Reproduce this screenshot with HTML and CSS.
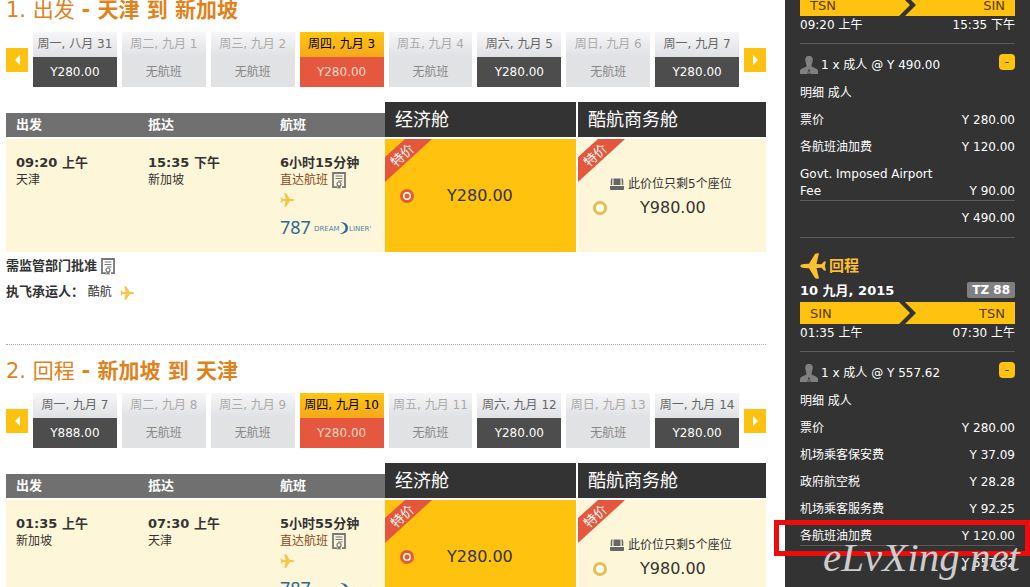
FILE: index.html
```
<!DOCTYPE html>
<html lang="zh-CN">
<head>
<meta charset="utf-8">
<title>选择航班</title>
<link rel="stylesheet" href="styles.css">
</head>

<body>
<svg class="defs" aria-hidden="true">
	<symbol id="plane" viewBox="0 0 26 26"><path d="M0 13Q1 11 4 11L9 10.800 15 1Q16.500 0 19 0.500L16.500 11 21.500 11.300 24 8.500H26L24.800 13 26 17.500H24L21.500 14.700 16.500 15 19 25.500Q16.500 26 15 25L9 15.200 4 15Q1 15 0 13z"/></symbol>
	<symbol id="doc" viewBox="0 0 14 17"><path d="M5 15.200H1V1H13V15.200H10" fill="none" stroke="#777" stroke-width="1.800"/><path d="M3.500 4H10.500M3.500 6.500H10.500M6 9H10.500" stroke="#777" stroke-width="1.200"/><circle cx="7" cy="12" r="2" fill="none" stroke="#777" stroke-width="1.200"/><path d="M5.500 14v3l1.500-1 1.500 1v-3z" fill="#777"/></symbol>
	<symbol id="person" viewBox="0 0 18 18"><path d="M9 0C6 0 5 2 5.300 4.500 5.600 7 6.500 8 6.500 10 6.500 11.500 0 12 0 15V18H7.500L8.300 13.500H9.700L10.500 18H18V15C18 12 11.500 11.500 11.500 10 11.500 8 12.400 7 12.700 4.500 13 2 12 0 9 0z" fill="#808080"/><path d="M9 14l1 3-1 1-1-1z" fill="#808080"/></symbol>
	<symbol id="seat" viewBox="0 0 14 12"><path d="M3.500 7V0.500H10.500V7z" fill="#666"/><path d="M1.500 7V2.500Q1.500 1 2.500 1M12.500 7V2.500Q12.500 1 11.500 1" fill="none" stroke="#666" stroke-width="1.500"/><path d="M0 8H14V11Q14 12 13 12H1Q0 12 0 11z" fill="#666"/></symbol>
	<symbol id="ribbon" viewBox="0 0 48 44"><path d="M20 0H47L0 43V18z" fill="#e4573d"/><text x="17" y="21" text-anchor="middle" transform="rotate(-43 17 16)" fill="#fff" font-size="13">特价</text></symbol>
	<symbol id="dream" viewBox="0 0 94 18"><text x="0" y="15" font-size="18" font-family="Noto Sans, sans-serif" fill="#2b6a94">787</text><text x="34" y="12" font-size="7" fill="#4f86a8">DREAM</text><text x="69" y="12" font-size="7" fill="#4f86a8">LINER'</text><path d="M60 3Q68 3 68 9T59 15Q65.500 13 65.500 9T60 3z" fill="#2b6a94"/></symbol>
	<symbol id="chevron" viewBox="0 0 18 22"><path d="M0 0H6L17 11 6 22H0L11 11z" fill="#333"/></symbol>
</svg>

<main class="main">
	<section class="trip">
		<h2>1. 出发 <b>- 天津 到 新加坡</b></h2>
		<div class="dates">
			<button class="arrow" aria-label="前一周"><svg width="5" height="10"><path d="M5 0V10L0 5z" fill="#fff"/></svg></button>
			<ul>
				<li><a href="#"><span>周一, 八月 31</span><em>Y280.00</em></a></li>
				<li class="none"><a href="#"><span>周二, 九月 1</span><em>无航班</em></a></li>
				<li class="none"><a href="#"><span>周三, 九月 2</span><em>无航班</em></a></li>
				<li class="on"><a href="#"><span>周四, 九月 3</span><em>Y280.00</em></a></li>
				<li class="none"><a href="#"><span>周五, 九月 4</span><em>无航班</em></a></li>
				<li><a href="#"><span>周六, 九月 5</span><em>Y280.00</em></a></li>
				<li class="none"><a href="#"><span>周日, 九月 6</span><em>无航班</em></a></li>
				<li><a href="#"><span>周一, 九月 7</span><em>Y280.00</em></a></li>
			</ul>
			<button class="arrow" aria-label="后一周"><svg width="5" height="10"><path d="M0 0V10L5 5z" fill="#fff"/></svg></button>
		</div>
		<table class="flight">
			<tr>
				<th class="c_time">出发</th>
				<th class="c_time">抵达</th>
				<th class="c_info">航班</th>
				<th class="cabin">经济舱</th>
				<th class="cabin biz">酷航商务舱</th>
			</tr>
			<tr>
				<td><strong>09:20 上午</strong><br>天津</td>
				<td><strong>15:35 下午</strong><br>新加坡</td>
				<td><strong>6小时15分钟</strong><br><a href="#" class="direct">直达航班</a> <svg class="doc"><use href="#doc"/></svg>
					<svg class="plane_s"><use href="#plane"/></svg>
					<svg class="dream"><use href="#dream"/></svg>
				</td>
				<td class="fare on"><svg class="ribbon"><use href="#ribbon"/></svg>
					<label><input type="radio" name="go" checked>Y280.00</label>
				</td>
				<td class="fare biz"><svg class="ribbon"><use href="#ribbon"/></svg>
					<p><svg class="seat"><use href="#seat"/></svg>此价位只剩5个座位</p>
					<label><input type="radio" name="go">Y980.00</label>
				</td>
			</tr>
		</table>
		<div class="notes">
			<p><b>需监管部门批准</b> <svg class="doc"><use href="#doc"/></svg></p>
			<p><b>执飞承运人：</b> 酷航 <svg class="plane_s"><use href="#plane"/></svg></p>
		</div>
	</section>

	<section class="trip">
		<h2>2. 回程 <b>- 新加坡 到 天津</b></h2>
		<div class="dates">
			<button class="arrow" aria-label="前一周"><svg width="5" height="10"><path d="M5 0V10L0 5z" fill="#fff"/></svg></button>
			<ul>
				<li><a href="#"><span>周一, 九月 7</span><em>Y888.00</em></a></li>
				<li class="none"><a href="#"><span>周二, 九月 8</span><em>无航班</em></a></li>
				<li class="none"><a href="#"><span>周三, 九月 9</span><em>无航班</em></a></li>
				<li class="on"><a href="#"><span>周四, 九月 10</span><em>Y280.00</em></a></li>
				<li class="none"><a href="#"><span>周五, 九月 11</span><em>无航班</em></a></li>
				<li><a href="#"><span>周六, 九月 12</span><em>Y280.00</em></a></li>
				<li class="none"><a href="#"><span>周日, 九月 13</span><em>无航班</em></a></li>
				<li><a href="#"><span>周一, 九月 14</span><em>Y280.00</em></a></li>
			</ul>
			<button class="arrow" aria-label="后一周"><svg width="5" height="10"><path d="M0 0V10L5 5z" fill="#fff"/></svg></button>
		</div>
		<table class="flight">
			<tr>
				<th class="c_time">出发</th>
				<th class="c_time">抵达</th>
				<th class="c_info">航班</th>
				<th class="cabin">经济舱</th>
				<th class="cabin biz">酷航商务舱</th>
			</tr>
			<tr>
				<td><strong>01:35 上午</strong><br>新加坡</td>
				<td><strong>07:30 上午</strong><br>天津</td>
				<td><strong>5小时55分钟</strong><br><a href="#" class="direct">直达航班</a> <svg class="doc"><use href="#doc"/></svg>
					<svg class="plane_s"><use href="#plane"/></svg>
					<svg class="dream"><use href="#dream"/></svg>
				</td>
				<td class="fare on"><svg class="ribbon"><use href="#ribbon"/></svg>
					<label><input type="radio" name="back" checked>Y280.00</label>
				</td>
				<td class="fare biz"><svg class="ribbon"><use href="#ribbon"/></svg>
					<p><svg class="seat"><use href="#seat"/></svg>此价位只剩5个座位</p>
					<label><input type="radio" name="back">Y980.00</label>
				</td>
			</tr>
		</table>
	</section>
</main>

<aside class="side">
	<div class="route"><span>TSN</span><svg><use href="#chevron"/></svg><span>SIN</span></div>
	<div class="times"><span>09:20 上午</span><span>15:35 下午</span></div>
	<div class="pax"><svg><use href="#person"/></svg><span>1 x 成人 @ Y 490.00</span><button aria-label="收起明细">-</button></div>
	<table class="fees">
		<tr><td colspan="2">明细 成人</td></tr>
		<tr><td>票价</td><td>Y 280.00</td></tr>
		<tr><td>各航班油加费</td><td>Y 120.00</td></tr>
		<tr><td>Govt. Imposed Airport Fee</td><td>Y 90.00</td></tr>
	</table>
	<div class="total">Y 490.00</div>

	<h3><svg><use href="#plane"/></svg>回程</h3>
	<div class="day"><b>10 九月, 2015</b><b class="no">TZ 88</b></div>
	<div class="route"><span>SIN</span><svg><use href="#chevron"/></svg><span>TSN</span></div>
	<div class="times"><span>01:35 上午</span><span>07:30 上午</span></div>
	<div class="pax"><svg><use href="#person"/></svg><span>1 x 成人 @ Y 557.62</span><button aria-label="收起明细">-</button></div>
	<table class="fees">
		<tr><td colspan="2">明细 成人</td></tr>
		<tr><td>票价</td><td>Y 280.00</td></tr>
		<tr><td>机场乘客保安费</td><td>Y 37.09</td></tr>
		<tr><td>政府航空税</td><td>Y 28.28</td></tr>
		<tr><td>机场乘客服务费</td><td>Y 92.25</td></tr>
		<tr><td>各航班油加费</td><td>Y 120.00</td></tr>
	</table>
	<div class="total last">Y 557.62
		<div class="mark_box"></div>
		<div class="watermark">eLvXing.net</div>
	</div>
</aside>
</body>
</html>
```
FILE: styles.css
```
body {margin:0;height:100vh;overflow:hidden;display:flex;background:#fff;color:#333;font:12px/17px "DejaVu Sans","Noto Sans CJK SC",sans-serif;}
ul,p,h2,h3 {margin:0;padding:0;} li {list-style:none;} em {font-style:normal;} a {text-decoration:none;}
button {border:0;padding:0;font:inherit;cursor:pointer;}
table {border-collapse:collapse;width:100%;}
.defs {position:absolute;width:0;height:0;}

.main {flex:1;padding:0 19px 0 6px;}
.trip {border-top:1px dotted #aaa;padding-top:12px;}
.trip:first-child {border:0;padding:0;margin-top:-4px;}
.trip h2 {font-size:21px;line-height:28px;font-weight:normal;color:#e0821c;margin-bottom:8px;}

/* date tabs */
.dates {display:flex;align-items:center;gap:5px;margin-bottom:15px;}
.dates ul {flex:1;display:flex;gap:5px;}
.dates li {flex:1;}
.dates a {display:block;text-align:center;white-space:nowrap;color:#666;}
.dates span {display:block;line-height:25px;background:linear-gradient(#f6f6f8,#e0e1e4);}
.dates em {display:block;line-height:30px;background:#4d4d4d;color:#fff;}
.dates .none span {color:#aaa;}
.dates .none em {background:#e1e2e4;color:#888;}
.dates .on span {background:linear-gradient(#fdc70f,#f7a81b);color:#000;}
.dates .on em {background:#e65740;color:#fbd9c0;}
.arrow {width:22px;height:24px;background:#fdc10f;display:flex;align-items:center;justify-content:center;}

/* flight table */
.flight {table-layout:fixed;}
.flight th {height:35px;box-sizing:border-box;padding:11px 0 0 10px;text-align:left;font-size:13px;line-height:24px;color:#fff;background:linear-gradient(#fff 11px,#707070 11px);}
.flight .c_time {width:132px;}
.flight .c_info {width:115px;}
.flight .cabin {width:192px;padding-top:0;font-size:18px;line-height:35px;font-weight:normal;background:#333;}
.flight td {height:114px;box-sizing:border-box;padding:15px 0 0 10px;vertical-align:top;background:#fef6d8;border-top:2px solid #fff;}
.flight .biz {border-left:2px solid #fff;width:auto;}
.flight strong {font-size:13px;}
.direct {color:#8a4a1a;}
.doc {width:14px;height:17px;vertical-align:middle;}
.plane_s {width:15px;height:14px;fill:#f7c648;transform:scaleX(-1);vertical-align:middle;}
.flight .plane_s {display:block;margin:4px 0 12px;}
.dream {display:block;width:94px;height:18px;}
.flight .fare {position:relative;padding:0 0 0 15px;vertical-align:middle;}
.flight .on {background:#ffc20e;}
.ribbon {position:absolute;left:0;top:0;width:48px;height:44px;}
.fare label {display:flex;align-items:center;gap:33px;font-size:16px;line-height:24px;}
.fare p {display:flex;align-items:center;gap:4px;padding-left:17px;line-height:24px;}
.fare input {appearance:none;box-sizing:border-box;margin:0;width:14px;height:14px;border:3px solid #ebbb4c;border-radius:50%;background:#fff;}
.fare input:checked {border-color:#e65a32;background:radial-gradient(#e65a32 2px,#fff 3px);}
.seat {width:14px;height:12px;}
.notes {padding:1px 0 39px;line-height:26px;}
.notes b {font-size:13px;}
.notes .plane_s {margin-left:4px;}

/* booking summary */
.side {width:215px;padding:0 15px;margin-top:-6px;background:#333;color:#fff;}
.route {display:grid;grid-template-columns:1fr 18px 1fr;align-items:center;height:22px;padding:0 10px;background:#ffc20e;color:#553c08;font-size:13px;}
.route svg {width:18px;height:22px;}
.route span:last-child {text-align:right;}
.times {display:flex;justify-content:space-between;padding:1px 0 9px;border-bottom:1px solid #5a5a5a;}
.pax {display:flex;align-items:center;gap:3px;height:24px;margin:9px 0 2px;}
.pax svg {width:18px;height:18px;}
.pax span {flex:1;}
.pax button {width:16px;height:16px;line-height:14px;border-radius:4px;background:#ffc20e;color:#553c08;align-self:flex-start;margin-top:1px;}
.fees td {padding:6px 0 4px;vertical-align:bottom;}
.fees td:first-child {width:70%;}
.fees td:last-child {text-align:right;white-space:nowrap;}
.fees td:first-child {text-align:left;white-space:normal;}
.fees tr:last-child td {padding-bottom:0;border-bottom:1px solid #5a5a5a;}
.total {padding:9px 0 10px;text-align:right;border-bottom:1px solid #5a5a5a;}
.last {position:relative;border:0;}
.side h3 {display:flex;align-items:center;gap:3px;margin:15px 0 2px;font-size:15px;line-height:24px;color:#fdc02f;}
.side h3 svg {width:26px;height:26px;fill:#fdc02f;}
.day {display:flex;justify-content:space-between;align-items:center;height:18px;margin-bottom:3px;font-size:13px;}
.day .no {padding:0 5px;font-size:12px;line-height:16px;border-radius:2px;background:#808080;}
.mark_box {position:absolute;left:-26px;right:-15px;top:-26px;height:26px;border:5px solid #ee0b0b;}
.watermark {position:absolute;right:-5px;top:-9px;font:italic 41px/40px "Liberation Serif",serif;color:#ccc;}
```
